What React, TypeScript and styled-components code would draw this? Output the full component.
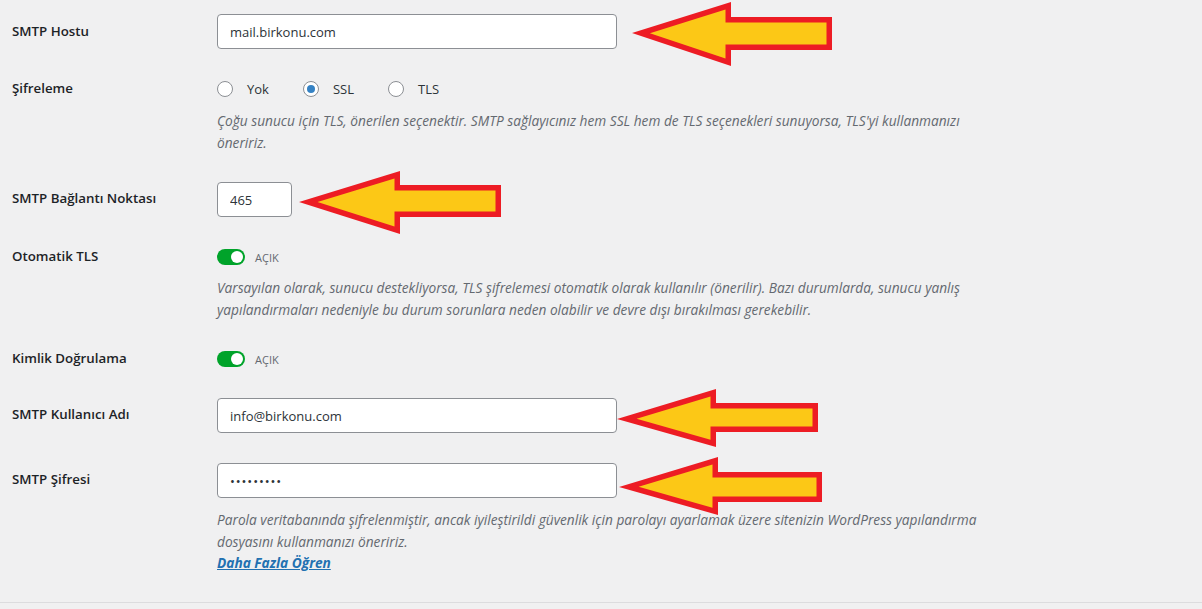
import React from "react"
import styled, { createGlobalStyle } from "styled-components"

// utils
type Pt = [number, number]

// shrink a simple polygon by d (used for the yellow fill inside the red outline)
const insetPolygon = (pts: Pt[], d: number): Pt[] => {
  let area = 0
  for (let i = 0; i < pts.length; i++) {
    const [x1, y1] = pts[i]
    const [x2, y2] = pts[(i + 1) % pts.length]
    area += x1 * y2 - x2 * y1
  }
  const sign = area > 0 ? 1 : -1
  const lines = pts.map((p, i) => {
    const q = pts[(i + 1) % pts.length]
    const len = Math.hypot(q[0] - p[0], q[1] - p[1])
    const u: Pt = [(q[0] - p[0]) / len, (q[1] - p[1]) / len]
    const n: Pt = [-u[1] * sign, u[0] * sign]
    return { p: [p[0] + n[0] * d, p[1] + n[1] * d] as Pt, u }
  })
  return pts.map((_, i) => {
    const a = lines[(i - 1 + lines.length) % lines.length]
    const b = lines[i]
    const cross = a.u[0] * b.u[1] - a.u[1] * b.u[0]
    const t = ((b.p[0] - a.p[0]) * b.u[1] - (b.p[1] - a.p[1]) * b.u[0]) / cross
    return [a.p[0] + a.u[0] * t, a.p[1] + a.u[1] * t] as Pt
  })
}

type ArrowSpec = {
  tip: Pt
  headX: number
  headTop: number
  headBottom: number
  shaftTop: number
  shaftBottom: number
  right: number
}

const arrowPoints = (a: ArrowSpec): Pt[] => [
  a.tip,
  [a.headX, a.headTop],
  [a.headX, a.shaftTop],
  [a.right, a.shaftTop],
  [a.right, a.shaftBottom],
  [a.headX, a.shaftBottom],
  [a.headX, a.headBottom],
]

const toAttr = (pts: Pt[]) => pts.map(p => `${p[0].toFixed(1)},${p[1].toFixed(1)}`).join(" ")

const ARROWS: ArrowSpec[] = [
  { tip: [632, 33], headX: 731, headTop: 2, headBottom: 66, shaftTop: 17, shaftBottom: 50, right: 832 },
  { tip: [299, 202], headX: 400, headTop: 171, headBottom: 234, shaftTop: 185, shaftBottom: 217, right: 501 },
  { tip: [617, 419], headX: 716, headTop: 389, headBottom: 447, shaftTop: 403, shaftBottom: 432, right: 818 },
  { tip: [619, 487], headX: 718, headTop: 457, headBottom: 515, shaftTop: 472, shaftBottom: 502, right: 822 },
]

// styles
const GlobalStyle = createGlobalStyle`
  html, body {
    margin: 0;
    padding: 0;
    background: #f0f0f1;
    font-family: "Open Sans", "Noto Sans", sans-serif;
    color: #1d2327;
  }
`

const Page = styled.div`
  position: relative;
  width: 1202px;
  height: 609px;
  overflow: hidden;
`

const Section = styled.div`
  border-bottom: 1px solid #dcdcde;
  padding: 0 0 13px 12px;
`

const Row = styled.div`
  display: grid;
  grid-template-columns: 205px 1fr;
  align-items: start;
  padding: 14px 0 16px;
`

const Label = styled.div<{ $offset: number }>`
  padding-top: ${p => p.$offset}px;
  font-size: 13.3px;
  font-weight: 600;
  line-height: 18px;
  color: #1d2327;
`

const Field = styled.div`
  display: flex;
  flex-direction: column;
  align-items: flex-start;
`

const TextInput = styled.input<{ $width: number; $spacing?: number }>`
  width: ${p => p.$width}px;
  height: 35px;
  box-sizing: border-box;
  padding: 0 12px;
  border: 1px solid #8c8f94;
  border-radius: 4px;
  background: #fff;
  font-family: "Open Sans", "Noto Sans", sans-serif;
  font-size: 13px;
  letter-spacing: ${p => p.$spacing ?? 0}px;
  color: #2c3338;
  outline: none;
`

const ControlLine = styled.div`
  height: 20px;
  display: flex;
  align-items: center;
`

const ToggleLine = styled(ControlLine)`
  height: 19px;
  padding-top: 1px;
  box-sizing: border-box;
`

const RadioOption = styled.label`
  display: flex;
  align-items: center;
  gap: 14px;
  margin-right: 34px;
  font-size: 13px;
  color: #2c3338;
`

const RadioCircle = styled.span<{ $checked?: boolean }>`
  width: 16px;
  height: 16px;
  box-sizing: border-box;
  border: 1px solid #8c8f94;
  border-radius: 50%;
  background: #fff;
  display: flex;
  align-items: center;
  justify-content: center;
  &::after {
    content: "";
    width: 8px;
    height: 8px;
    border-radius: 50%;
    background: ${p => (p.$checked ? "#3582c4" : "transparent")};
  }
`

const Toggle = styled.span<{ $on?: boolean }>`
  position: relative;
  width: 28px;
  height: 16px;
  border-radius: 8px;
  background: ${p => (p.$on ? "#00a32a" : "#c3c4c7")};
  margin-right: 10px;
  &::after {
    content: "";
    position: absolute;
    top: 2px;
    ${p => (p.$on ? "right: 2px;" : "left: 2px;")}
    width: 12px;
    height: 12px;
    border-radius: 50%;
    background: #fff;
  }
`

const ToggleText = styled.span`
  font-size: 11px;
  color: #646970;
`

const Description = styled.p`
  margin: 11px 0 -1px;
  max-width: 785px;
  font-size: 13.7px;
  font-style: italic;
  line-height: 21.5px;
  color: #646970;
`

const LearnMore = styled.a`
  display: block;
  font-weight: 700;
  color: #2271b1;
  text-decoration: underline;
`

const Annotations = styled.svg`
  position: absolute;
  top: 0;
  left: 0;
  pointer-events: none;
`

const Arrow = ({ spec }: { spec: ArrowSpec }) => {
  const outer = arrowPoints(spec)
  const inner = insetPolygon(outer, 5.5)
  return (
    <g>
      <polygon points={toAttr(outer)} fill="#ed1c24" />
      <polygon points={toAttr(inner)} fill="#fcc816" />
    </g>
  )
}

const Radio = ({ label, checked }: { label: string; checked?: boolean }) => (
  <RadioOption>
    <RadioCircle $checked={checked} />
    {label}
  </RadioOption>
)

const Switch = () => (
  <ToggleLine>
    <Toggle $on />
    <ToggleText>AÇIK</ToggleText>
  </ToggleLine>
)

export default function App() {
  return (
    <Page>
      <GlobalStyle />
      <Section>
        <Row>
          <Label $offset={8}>SMTP Hostu</Label>
          <Field>
            <TextInput $width={400} defaultValue="mail.birkonu.com" />
          </Field>
        </Row>
        <Row>
          <Label $offset={0}>Şifreleme</Label>
          <Field>
            <ControlLine>
              <Radio label="Yok" />
              <Radio label="SSL" checked />
              <Radio label="TLS" />
            </ControlLine>
            <Description>
              Çoğu sunucu için TLS, önerilen seçenektir. SMTP sağlayıcınız hem SSL hem de TLS seçenekleri sunuyorsa, TLS'yi kullanmanızı öneririz.
            </Description>
          </Field>
        </Row>
        <Row>
          <Label $offset={7}>SMTP Bağlantı Noktası</Label>
          <Field>
            <TextInput $width={75} defaultValue="465" />
          </Field>
        </Row>
        <Row>
          <Label $offset={0}>Otomatik TLS</Label>
          <Field>
            <Switch />
            <Description>
              Varsayılan olarak, sunucu destekliyorsa, TLS şifrelemesi otomatik olarak kullanılır (önerilir). Bazı durumlarda, sunucu yanlış yapılandırmaları nedeniyle bu durum sorunlara neden olabilir ve devre dışı bırakılması gerekebilir.
            </Description>
          </Field>
        </Row>
        <Row>
          <Label $offset={0}>Kimlik Doğrulama</Label>
          <Field>
            <Switch />
          </Field>
        </Row>
        <Row>
          <Label $offset={7}>SMTP Kullanıcı Adı</Label>
          <Field>
            <TextInput $width={400} defaultValue="info@birkonu.com" />
          </Field>
        </Row>
        <Row>
          <Label $offset={7}>SMTP Şifresi</Label>
          <Field>
            <TextInput $width={400} $spacing={0.9} defaultValue="•••••••••" />
            <Description>
              Parola veritabanında şifrelenmiştir, ancak iyileştirildi güvenlik için parolayı ayarlamak üzere sitenizin WordPress yapılandırma dosyasını kullanmanızı öneririz.
              <LearnMore href="#">Daha Fazla Öğren</LearnMore>
            </Description>
          </Field>
        </Row>
      </Section>
      <Annotations width={1202} height={609} viewBox="0 0 1202 609">
        {ARROWS.map((a, i) => (
          <Arrow key={i} spec={a} />
        ))}
      </Annotations>
    </Page>
  )
}
